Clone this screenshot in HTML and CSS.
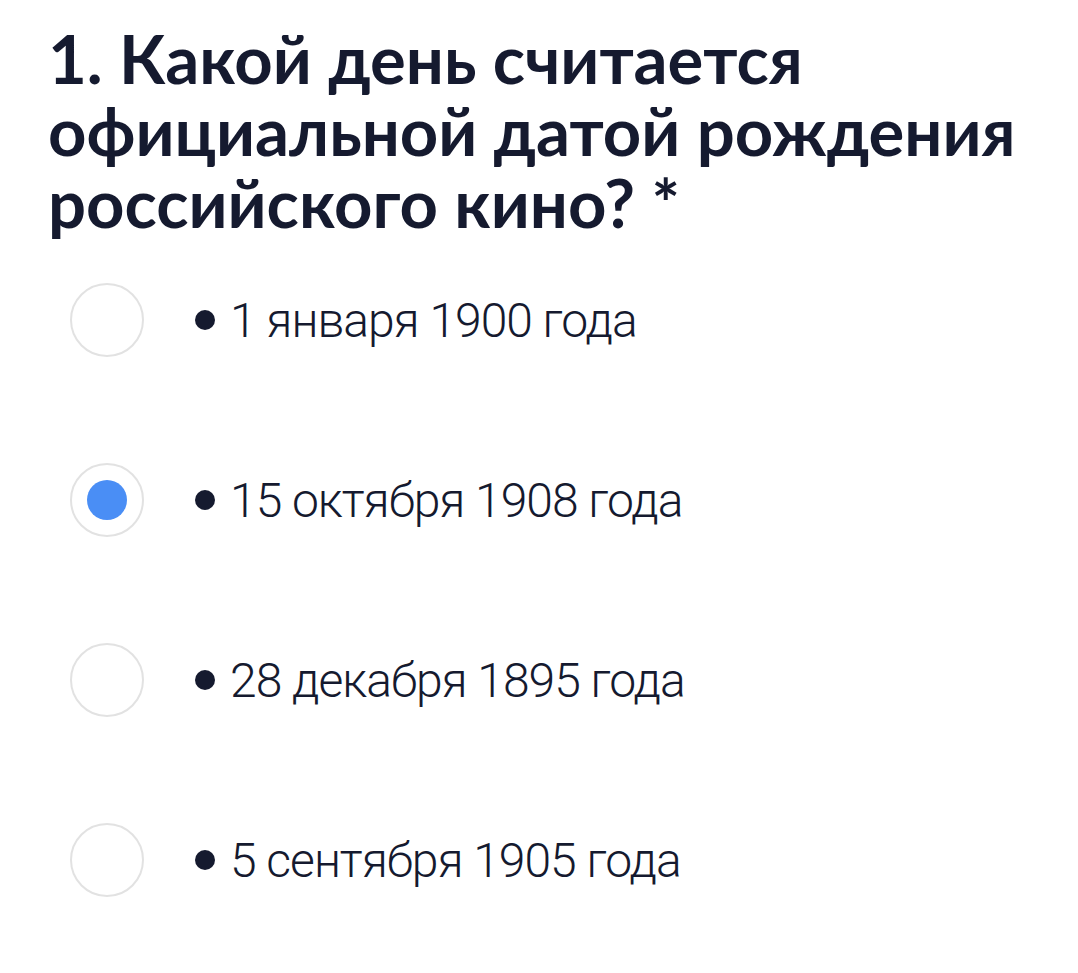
FILE: index.html
```html
<!DOCTYPE html>
<html lang="ru">
<head>
<meta charset="utf-8">
<link rel="stylesheet" href="styles.css">
</head>
<body>
<div class="page">
  <h1 class="question">1. Какой день считается официальной датой рождения российского кино? *</h1>
  <div class="options">
    <div class="option"><span class="radio"></span><span class="label"><span class="dot"></span>1 января 1900 года</span></div>
    <div class="option"><span class="radio checked"></span><span class="label"><span class="dot"></span>15 октября 1908 года</span></div>
    <div class="option"><span class="radio"></span><span class="label"><span class="dot"></span>28 декабря 1895 года</span></div>
    <div class="option"><span class="radio"></span><span class="label"><span class="dot"></span>5 сентября 1905 года</span></div>
  </div>
</div>
</body>
</html>
```

FILE: styles.css
```css
html, body {
  margin: 0;
  padding: 0;
  background: #ffffff;
}
body {
  width: 1078px;
  height: 973px;
  overflow: hidden;
  font-family: "Lato", "Liberation Sans", sans-serif;
  color: #151a2f;
}
.page {
  padding: 22px 40px 0 48px;
}
.question {
  margin: 0;
  font-size: 67px;
  line-height: 72px;
  font-weight: 700;
  letter-spacing: 0;
}
.options {
  display: flex;
  flex-direction: column;
  margin-top: -8px;
  padding-left: 22px;
}
.option {
  display: flex;
  align-items: center;
  height: 180px;
}
.radio {
  box-sizing: border-box;
  width: 74px;
  height: 74px;
  border-radius: 50%;
  border: 2px solid #e2e2e2;
  display: flex;
  align-items: center;
  justify-content: center;
  flex: none;
}
.radio.checked::after {
  content: "";
  width: 40px;
  height: 40px;
  border-radius: 50%;
  background: #4a8ef5;
}
.label {
  display: flex;
  align-items: center;
  margin-left: 51px;
  font-family: "Roboto", "Liberation Sans", sans-serif;
  font-size: 48px;
  font-weight: 300;
  letter-spacing: -1px;
}
.dot {
  width: 20px;
  height: 20px;
  border-radius: 50%;
  background: #151a2f;
  margin-right: 15px;
  flex: none;
}
```
